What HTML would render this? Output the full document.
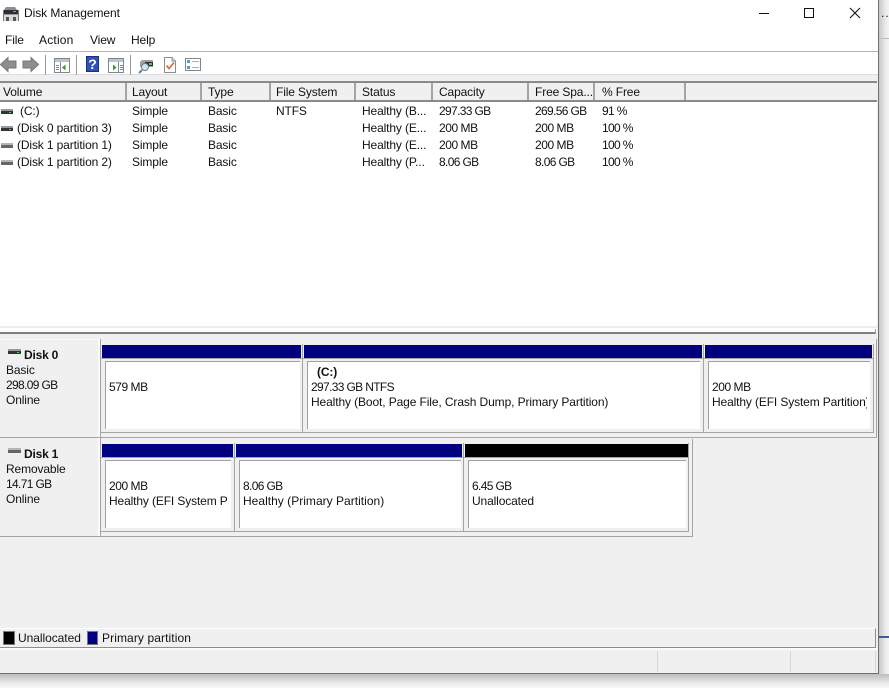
<!DOCTYPE html>
<html><head><meta charset="utf-8">
<style>
html,body{margin:0;padding:0;width:889px;height:688px;overflow:hidden;background:#f1f1f1}
body{position:relative;font-family:"Liberation Sans",sans-serif;font-size:12px;color:#111;letter-spacing:-.13px}
.a{position:absolute}
.t{position:absolute;white-space:nowrap;line-height:15px;height:15px}
.n{letter-spacing:-.65px}
.m{letter-spacing:-.45px}
svg{position:absolute;overflow:visible}
.g{position:absolute;background:#a4a4a4}
.b{position:absolute;background:#fff;border-left:1px solid #a0a0a0;border-top:1px solid #a0a0a0}
</style></head><body>
<!-- outside shading -->
<div class="a" style="left:879px;top:0;width:10px;height:688px;background:linear-gradient(90deg,#c8c8c8,#ececec 70%,#f3f3f3)"></div>
<div class="a" style="left:879px;top:38px;width:10px;height:1px;background:#bdbdbd"></div>
<div class="a" style="left:879px;top:636px;width:10px;height:2px;background:#3a5f96"></div>
<div class="t" style="left:881px;top:6px;letter-spacing:1px">..</div>
<div class="a" style="left:0;top:674px;width:889px;height:14px;background:linear-gradient(180deg,#bdbdbd,#ededed 70%,#f6f6f6)"></div>

<!-- window -->
<div class="a" style="left:0;top:0;width:878px;height:673px;background:#f0f0f0;border-right:1px solid #6f6f6f;border-bottom:1px solid #6f6f6f"></div>
<div class="a" style="left:0;top:0;width:878px;height:74px;background:#fff"></div>
<div class="a" style="left:0;top:51px;width:878px;height:1px;background:#b4b6bc"></div>
<div class="a" style="left:0;top:74px;width:878px;height:1px;background:#dedede"></div>

<!-- title icon -->
<svg style="left:3px;top:6px" width="16" height="16" viewBox="0 0 16 16">
<path d="M3 1H12L14 4H1Z" fill="#8a8f94"/><rect x="1" y="4" width="14" height="4" fill="#2b2f33"/><rect x="10" y="5" width="3" height="1" fill="#4ed04e"/><rect x="1" y="8" width="14" height="7" fill="#d9d9d9"/><rect x="1" y="8" width="14" height="1" fill="#9a9a9a"/><rect x="3" y="11" width="3" height="4" fill="#555"/><rect x="10" y="11" width="3" height="4" fill="#555"/><rect x="0" y="4" width="1" height="11" fill="#777"/><rect x="15" y="4" width="1" height="11" fill="#777"/>
</svg>
<div class="t" style="left:24px;top:6px;letter-spacing:-.05px">Disk Management</div>

<!-- caption buttons -->
<svg style="left:750px;top:0" width="125" height="28" viewBox="0 0 125 28" fill="none" stroke="#111" stroke-width="1" shape-rendering="crispEdges">
<path d="M9 13.500H19"/><rect x="54.500" y="8.500" width="9" height="9"/>
</svg>
<svg style="left:849px;top:7px" width="12" height="12" viewBox="0 0 12 12" fill="none" stroke="#111" stroke-width="1.100"><path d="M1 1L11 11M11 1L1 11"/></svg>

<!-- menu -->
<div class="t" style="left:5px;top:33px">File</div>
<div class="t" style="left:39px;top:33px;letter-spacing:.2px">Action</div>
<div class="t" style="left:90px;top:33px">View</div>
<div class="t" style="left:131px;top:33px">Help</div>

<!-- toolbar -->
<svg style="left:0;top:52px" width="210" height="24" viewBox="0 0 210 24">
<path d="M0.500 12.500L8 5.500V9H16V16H8V19.500Z" fill="#8e8e8e" stroke="#777"/>
<path d="M38.500 12.500L31 5.500V9H23V16H31V19.500Z" fill="#8e8e8e" stroke="#777"/>
<rect x="45" y="3" width="1" height="20" fill="#9b9b9b"/>
<g><rect x="54.500" y="6.500" width="15" height="14" fill="#fff" stroke="#7d8790"/><rect x="55" y="7" width="14" height="3" fill="#b9c4cd"/><rect x="56" y="13" width="3" height="1" fill="#7d8790"/><rect x="56" y="15" width="3" height="1" fill="#7d8790"/><rect x="56" y="17" width="3" height="1" fill="#7d8790"/><rect x="60" y="10" width="1" height="10" fill="#7d8790"/><path d="M62 15.500L65.500 12.500V18.500Z" fill="#2e9e2e"/></g>
<rect x="76" y="3" width="1" height="20" fill="#9b9b9b"/>
<rect x="86" y="4" width="13" height="16" fill="#2f52b5"/><rect x="86.500" y="4.500" width="12" height="15" fill="none" stroke="#1c2f80"/>
<text x="92.500" y="17" font-family="Liberation Sans" font-size="14" font-weight="bold" fill="#fff" text-anchor="middle">?</text>
<g><rect x="108.500" y="6.500" width="15" height="14" fill="#fff" stroke="#7d8790"/><rect x="109" y="7" width="14" height="3" fill="#b9c4cd"/><rect x="120" y="13" width="3" height="1" fill="#7d8790"/><rect x="120" y="15" width="3" height="1" fill="#7d8790"/><rect x="120" y="17" width="3" height="1" fill="#7d8790"/><rect x="118" y="10" width="1" height="10" fill="#7d8790"/><path d="M113 12.500L116.500 15.500L113 18.500Z" fill="#2e9e2e"/></g>
<rect x="130" y="3" width="1" height="20" fill="#9b9b9b"/>
<g><path d="M142 8H153V15H140V10Z" fill="#9aa0a5"/><rect x="145" y="10" width="8" height="4" fill="#2b2f33"/><rect x="149" y="11" width="3" height="2" fill="#4ed04e"/><circle cx="145" cy="15" r="3.500" fill="#cfe3f2" stroke="#6f7f8c"/><path d="M142 18L139 21" stroke="#6f7f8c" stroke-width="2"/></g>
<g><path d="M164.500 5.500H172L175.500 9V20.500H164.500Z" fill="#fff" stroke="#8e8e8e"/><path d="M172 5.500V9H175.500" fill="#ddd" stroke="#8e8e8e"/><path d="M166.500 13.500L169 16.500L174 10.500" fill="none" stroke="#e2622a" stroke-width="1.600"/></g>
<g><rect x="185.500" y="6.500" width="15" height="12" fill="#fff" stroke="#7d8790"/><rect x="187" y="8" width="3" height="3" fill="#4f9be0"/><rect x="187" y="14" width="3" height="3" fill="#4f9be0"/><rect x="192" y="9" width="7" height="1" fill="#a8aeb3"/><rect x="192" y="15" width="7" height="1" fill="#a8aeb3"/></g>
</svg>

<!-- list -->
<div class="a" style="left:0;top:81px;width:877px;height:2px;background:#8a8a8a"></div>
<div class="a" style="left:0;top:83px;width:877px;height:17px;background:#f0f0f0"></div>
<div class="a" style="left:0;top:100px;width:877px;height:2px;background:#8a8a8a"></div>
<div class="a" style="left:0;top:102px;width:877px;height:224px;background:#fff"></div>
<div class="a" style="left:0;top:326px;width:877px;height:2px;background:#ededed"></div>
<div class="a" style="left:0;top:328px;width:877px;height:4px;background:#fff"></div>
<div class="a" style="left:0;top:332px;width:876px;height:2px;background:#808080"></div>
<div class="a" style="left:875px;top:329px;width:1px;height:5px;background:#9a9a9a"></div>
<div class="g" style="left:125px;top:83px;width:2px;height:17px"></div>
<div class="g" style="left:200px;top:83px;width:2px;height:17px"></div>
<div class="g" style="left:269px;top:83px;width:2px;height:17px"></div>
<div class="g" style="left:354px;top:83px;width:2px;height:17px"></div>
<div class="g" style="left:431px;top:83px;width:2px;height:17px"></div>
<div class="g" style="left:527px;top:83px;width:2px;height:17px"></div>
<div class="g" style="left:593px;top:83px;width:2px;height:17px"></div>
<div class="g" style="left:684px;top:83px;width:2px;height:17px"></div>

<div class="t" style="left:3px;top:85px">Volume</div><div class="t" style="left:132px;top:85px">Layout</div><div class="t" style="left:208px;top:85px">Type</div><div class="t" style="left:276px;top:85px">File System</div><div class="t" style="left:362px;top:85px">Status</div><div class="t" style="left:439px;top:85px">Capacity</div><div class="t" style="left:535px;top:85px">Free Spa...</div><div class="t" style="left:602px;top:85px">% Free</div>

<svg style="left:0;top:107px" width="14" height="60" viewBox="0 0 14 60">
<rect x="1" y="2" width="12" height="2" fill="#9a9a9a"/><rect x="1" y="4" width="12" height="3" fill="#333"/><rect x="9" y="5" width="2" height="1" fill="#4ed04e"/>
<g transform="translate(0,17)"><rect x="1" y="2" width="12" height="2" fill="#9a9a9a"/><rect x="1" y="4" width="12" height="3" fill="#333"/><rect x="9" y="5" width="2" height="1" fill="#4ed04e"/></g>
<rect x="1" y="36" width="12" height="2" fill="#b5b5b5"/><rect x="1" y="38" width="12" height="3" fill="#666"/>
<rect x="1" y="53" width="12" height="2" fill="#b5b5b5"/><rect x="1" y="55" width="12" height="3" fill="#666"/>
</svg>

<div class="t" style="left:20px;top:104px">(C:)</div><div class="t" style="left:132px;top:104px">Simple</div><div class="t" style="left:208px;top:104px">Basic</div><div class="t" style="left:276px;top:104px">NTFS</div><div class="t" style="left:362px;top:104px">Healthy (B...</div><div class="t n" style="left:439px;top:104px">297.33 GB</div><div class="t n" style="left:535px;top:104px">269.56 GB</div><div class="t n" style="left:602px;top:104px">91 %</div>
<div class="t" style="left:17px;top:121px">(Disk 0 partition 3)</div><div class="t" style="left:132px;top:121px">Simple</div><div class="t" style="left:208px;top:121px">Basic</div><div class="t" style="left:362px;top:121px">Healthy (E...</div><div class="t m" style="left:439px;top:121px">200 MB</div><div class="t m" style="left:535px;top:121px">200 MB</div><div class="t n" style="left:602px;top:121px">100 %</div>
<div class="t" style="left:17px;top:138px">(Disk 1 partition 1)</div><div class="t" style="left:132px;top:138px">Simple</div><div class="t" style="left:208px;top:138px">Basic</div><div class="t" style="left:362px;top:138px">Healthy (E...</div><div class="t m" style="left:439px;top:138px">200 MB</div><div class="t m" style="left:535px;top:138px">200 MB</div><div class="t n" style="left:602px;top:138px">100 %</div>
<div class="t" style="left:17px;top:155px">(Disk 1 partition 2)</div><div class="t" style="left:132px;top:155px">Simple</div><div class="t" style="left:208px;top:155px">Basic</div><div class="t" style="left:362px;top:155px">Healthy (P...</div><div class="t n" style="left:439px;top:155px">8.06 GB</div><div class="t n" style="left:535px;top:155px">8.06 GB</div><div class="t n" style="left:602px;top:155px">100 %</div>

<!-- disk 0 label -->
<div class="a" style="left:0;top:339px;width:100px;height:1px;background:#fbfbfb"></div>
<div class="a" style="left:98px;top:339px;width:2px;height:98px;background:#fbfbfb"></div>
<div class="g" style="left:100px;top:339px;width:1px;height:99px"></div>
<div class="g" style="left:0;top:437px;width:877px;height:1px"></div>
<div class="g" style="left:876px;top:339px;width:1px;height:98px"></div>
<svg style="left:8px;top:348px" width="14" height="10" viewBox="0 0 14 10"><rect x="0" y="1" width="13" height="2" fill="#9a9a9a"/><rect x="0" y="3" width="13" height="3" fill="#333"/><rect x="9" y="4" width="2" height="1" fill="#4ed04e"/></svg>
<div class="t" style="left:24px;top:348px;font-weight:bold;letter-spacing:-.2px">Disk 0</div>
<div class="t" style="left:6px;top:363px">Basic</div><div class="t n" style="left:6px;top:378px">298.09 GB</div><div class="t" style="left:6px;top:393px">Online</div>

<!-- disk 1 label -->
<div class="a" style="left:98px;top:438px;width:2px;height:98px;background:#fbfbfb"></div>
<div class="g" style="left:100px;top:438px;width:1px;height:98px"></div>
<div class="g" style="left:0;top:536px;width:692px;height:1px"></div>
<div class="g" style="left:692px;top:439px;width:1px;height:98px"></div>
<svg style="left:8px;top:447px" width="14" height="10" viewBox="0 0 14 10"><rect x="0" y="1" width="13" height="2" fill="#b5b5b5"/><rect x="0" y="3" width="13" height="3" fill="#666"/></svg>
<div class="t" style="left:24px;top:447px;font-weight:bold;letter-spacing:-.2px">Disk 1</div>
<div class="t" style="left:6px;top:462px">Removable</div><div class="t n" style="left:6px;top:477px">14.71 GB</div><div class="t" style="left:6px;top:492px">Online</div>

<!-- disk 0 partitions -->
<div class="a" style="left:102px;top:345px;width:199px;height:13px;background:#000080"></div>
<div class="a" style="left:304px;top:345px;width:398px;height:13px;background:#000080"></div>
<div class="a" style="left:705px;top:345px;width:167px;height:13px;background:#000080"></div>
<div class="g" style="left:101px;top:358px;width:772px;height:1px"></div>
<div class="g" style="left:101px;top:432px;width:773px;height:1px"></div>
<div class="g" style="left:873px;top:344px;width:1px;height:88px"></div>
<div class="g" style="left:302px;top:344px;width:1px;height:88px"></div>
<div class="g" style="left:703px;top:344px;width:1px;height:88px"></div>
<div class="b" style="left:105px;top:361px;width:194px;height:67px"></div>
<div class="b" style="left:307px;top:361px;width:392px;height:67px"></div>
<div class="b" style="left:708px;top:361px;width:161px;height:67px"></div>
<div class="t m" style="left:109px;top:380px">579 MB</div>
<div class="t" style="left:317px;top:365px;font-weight:bold">(C:)</div>
<div class="t n" style="left:311px;top:380px">297.33 GB NTFS</div>
<div class="t" style="left:311px;top:395px;letter-spacing:-.11px">Healthy (Boot, Page File, Crash Dump, Primary Partition)</div>
<div class="t m" style="left:712px;top:380px">200 MB</div>
<div class="t" style="left:712px;top:395px;width:155px;overflow:hidden">Healthy (EFI System Partition)</div>

<!-- disk 1 partitions -->
<div class="a" style="left:102px;top:444px;width:131px;height:13px;background:#000080"></div>
<div class="a" style="left:236px;top:444px;width:226px;height:13px;background:#000080"></div>
<div class="a" style="left:465px;top:444px;width:223px;height:13px;background:#000"></div>
<div class="g" style="left:101px;top:457px;width:588px;height:1px"></div>
<div class="g" style="left:101px;top:531px;width:588px;height:1px"></div>
<div class="g" style="left:688px;top:443px;width:1px;height:88px"></div>
<div class="g" style="left:234px;top:443px;width:1px;height:88px"></div>
<div class="g" style="left:463px;top:443px;width:1px;height:88px"></div>
<div class="b" style="left:105px;top:460px;width:125px;height:67px"></div>
<div class="b" style="left:239px;top:460px;width:221px;height:67px"></div>
<div class="b" style="left:468px;top:460px;width:217px;height:67px"></div>
<div class="t m" style="left:109px;top:479px">200 MB</div>
<div class="t" style="left:109px;top:494px;width:118px;overflow:hidden">Healthy (EFI System Partition)</div>
<div class="t n" style="left:243px;top:479px">8.06 GB</div>
<div class="t" style="left:243px;top:494px;letter-spacing:.02px">Healthy (Primary Partition)</div>
<div class="t n" style="left:472px;top:479px">6.45 GB</div>
<div class="t" style="left:472px;top:494px">Unallocated</div>

<!-- legend -->
<div class="a" style="left:0;top:628px;width:875px;height:18px;border-top:1px solid #fff;border-bottom:1px solid #8e8e8e;border-right:1px solid #8e8e8e"></div>
<div class="a" style="left:0;top:648px;width:878px;height:2px;background:#fbfbfb"></div>
<div class="a" style="left:3px;top:631px;width:10px;height:12px;background:#000;border:1px solid #777"></div>
<div class="a" style="left:87px;top:631px;width:9px;height:12px;background:#000080;border:1px solid #777"></div>
<div class="t" style="left:18px;top:631px;letter-spacing:-.05px">Unallocated</div>
<div class="t" style="left:102px;top:631px;letter-spacing:.1px">Primary partition</div>

<!-- status bar -->
<div class="a" style="left:657px;top:651px;width:1px;height:21px;background:#d5d5d5"></div>
<div class="a" style="left:790px;top:651px;width:1px;height:21px;background:#d5d5d5"></div>
<div class="a" style="left:875px;top:651px;width:1px;height:21px;background:#d5d5d5"></div>
</body></html>
